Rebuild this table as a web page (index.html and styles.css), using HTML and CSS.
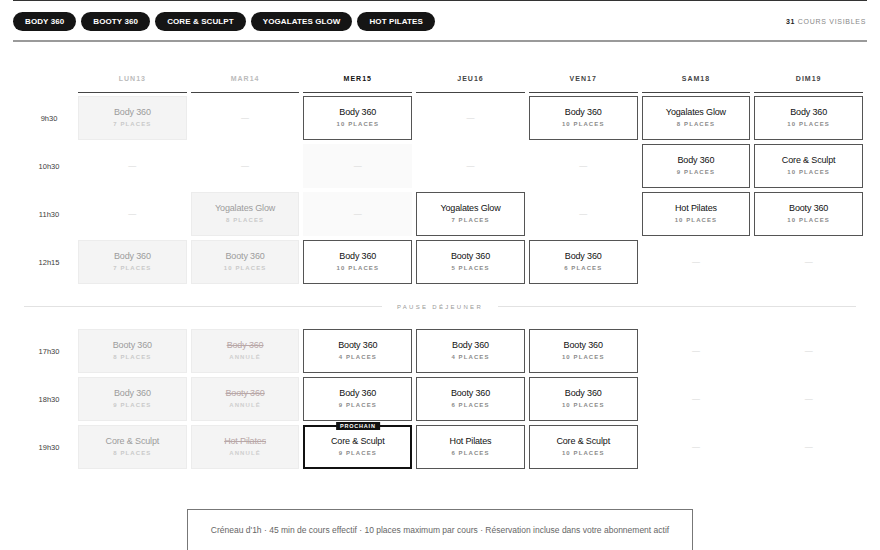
FILE: index.html
```html
<!DOCTYPE html>
<html lang="fr">
<head>
<meta charset="utf-8">
<title>Planning des cours</title>
<link rel="stylesheet" href="styles.css">
</head>
<body>
<div class="page">
  <header class="topbar">
    <nav class="filters">
      <span class="pill">Body 360</span>
      <span class="pill">Booty 360</span>
      <span class="pill">Core &amp; Sculpt</span>
      <span class="pill">Yogalates Glow</span>
      <span class="pill">Hot Pilates</span>
    </nav>
    <div class="count"><b>31</b> COURS VISIBLES</div>
  </header>

  <section class="schedule">
    <div class="grid head">
      <div></div>
      <div class="day past">LUN13</div>
      <div class="day past">MAR14</div>
      <div class="day today">MER15</div>
      <div class="day">JEU16</div>
      <div class="day">VEN17</div>
      <div class="day">SAM18</div>
      <div class="day">DIM19</div>
    </div>

    <div class="grid body">
      <div class="time">9h30</div>
      <div class="cell done"><span class="name">Body 360</span><span class="places">7 PLACES</span></div>
      <div class="cell empty">—</div>
      <div class="cell open"><span class="name">Body 360</span><span class="places">10 PLACES</span></div>
      <div class="cell empty">—</div>
      <div class="cell open"><span class="name">Body 360</span><span class="places">10 PLACES</span></div>
      <div class="cell open"><span class="name">Yogalates Glow</span><span class="places">8 PLACES</span></div>
      <div class="cell open"><span class="name">Body 360</span><span class="places">10 PLACES</span></div>

      <div class="time">10h30</div>
      <div class="cell empty">—</div>
      <div class="cell empty">—</div>
      <div class="cell empty shade">—</div>
      <div class="cell empty">—</div>
      <div class="cell empty">—</div>
      <div class="cell open"><span class="name">Body 360</span><span class="places">9 PLACES</span></div>
      <div class="cell open"><span class="name">Core &amp; Sculpt</span><span class="places">10 PLACES</span></div>

      <div class="time">11h30</div>
      <div class="cell empty">—</div>
      <div class="cell done"><span class="name">Yogalates Glow</span><span class="places">8 PLACES</span></div>
      <div class="cell empty shade">—</div>
      <div class="cell open"><span class="name">Yogalates Glow</span><span class="places">7 PLACES</span></div>
      <div class="cell empty">—</div>
      <div class="cell open"><span class="name">Hot Pilates</span><span class="places">10 PLACES</span></div>
      <div class="cell open"><span class="name">Booty 360</span><span class="places">10 PLACES</span></div>

      <div class="time">12h15</div>
      <div class="cell done"><span class="name">Body 360</span><span class="places">7 PLACES</span></div>
      <div class="cell done"><span class="name">Booty 360</span><span class="places">10 PLACES</span></div>
      <div class="cell open"><span class="name">Body 360</span><span class="places">10 PLACES</span></div>
      <div class="cell open"><span class="name">Booty 360</span><span class="places">5 PLACES</span></div>
      <div class="cell open"><span class="name">Body 360</span><span class="places">6 PLACES</span></div>
      <div class="cell empty">—</div>
      <div class="cell empty">—</div>

      <div class="pause"><span class="pause-label">PAUSE DÉJEUNER</span></div>

      <div class="time">17h30</div>
      <div class="cell done"><span class="name">Booty 360</span><span class="places">8 PLACES</span></div>
      <div class="cell done cancelled"><span class="name">Body 360</span><span class="places">ANNULÉ</span></div>
      <div class="cell open"><span class="name">Booty 360</span><span class="places">4 PLACES</span></div>
      <div class="cell open"><span class="name">Body 360</span><span class="places">4 PLACES</span></div>
      <div class="cell open"><span class="name">Booty 360</span><span class="places">10 PLACES</span></div>
      <div class="cell empty">—</div>
      <div class="cell empty">—</div>

      <div class="time">18h30</div>
      <div class="cell done"><span class="name">Body 360</span><span class="places">9 PLACES</span></div>
      <div class="cell done cancelled"><span class="name">Booty 360</span><span class="places">ANNULÉ</span></div>
      <div class="cell open"><span class="name">Body 360</span><span class="places">9 PLACES</span></div>
      <div class="cell open"><span class="name">Booty 360</span><span class="places">6 PLACES</span></div>
      <div class="cell open"><span class="name">Body 360</span><span class="places">10 PLACES</span></div>
      <div class="cell empty">—</div>
      <div class="cell empty">—</div>

      <div class="time">19h30</div>
      <div class="cell done"><span class="name">Core &amp; Sculpt</span><span class="places">8 PLACES</span></div>
      <div class="cell done cancelled"><span class="name">Hot Pilates</span><span class="places">ANNULÉ</span></div>
      <div class="cell open next"><span class="badge">PROCHAIN</span><span class="name">Core &amp; Sculpt</span><span class="places">9 PLACES</span></div>
      <div class="cell open"><span class="name">Hot Pilates</span><span class="places">6 PLACES</span></div>
      <div class="cell open"><span class="name">Core &amp; Sculpt</span><span class="places">10 PLACES</span></div>
      <div class="cell empty">—</div>
      <div class="cell empty">—</div>
    </div>
  </section>

  <footer class="info">Créneau d'1h · 45 min de cours effectif · 10 places maximum par cours · Réservation incluse dans votre abonnement actif</footer>
</div>
</body>
</html>
```

FILE: styles.css
```css
* { box-sizing: border-box; }

html, body {
  margin: 0;
  padding: 0;
  background: #fff;
  font-family: "Liberation Sans", Arial, sans-serif;
  color: #111;
}

.page {
  padding: 0 13px;
}

.topbar {
  display: flex;
  justify-content: space-between;
  align-items: center;
  border-top: 1px solid #333;
  border-bottom: 2px solid #9a9a9a;
  padding: 11px 0 9px;
}

.filters {
  display: flex;
  gap: 5px;
}

.pill {
  display: inline-flex;
  align-items: center;
  height: 19px;
  padding: 0 12px;
  border-radius: 10px;
  background: #151515;
  color: #fff;
  font-size: 8px;
  font-weight: bold;
  letter-spacing: 0.1px;
  text-transform: uppercase;
}

.count {
  font-size: 7px;
  letter-spacing: 0.7px;
  color: #888;
  margin-right: 1px;
}

.count b {
  color: #222;
}

.schedule {
  margin: 0 4px 0 11px;
}

.grid {
  display: grid;
  grid-template-columns: 50px repeat(7, 1fr);
  column-gap: 4px;
}

.head {
  margin-bottom: 3px;
}

.day {
  padding-top: 33px;
  padding-bottom: 9px;
  border-bottom: 1px solid #444;
  text-align: center;
  font-size: 7px;
  line-height: 8px;
  font-weight: bold;
  letter-spacing: 1px;
  color: #444;
}

.day.past { color: #bbb; }
.day.today { color: #111; }

.body {
  grid-template-rows: repeat(4, 44px) 37px repeat(3, 44px);
  row-gap: 4px;
}

.time {
  display: flex;
  align-items: center;
  justify-content: center;
  font-size: 7.5px;
  color: #3c3c3c;
}

.cell {
  position: relative;
  display: flex;
  flex-direction: column;
  align-items: center;
  justify-content: center;
  padding-bottom: 2px;
}

.name {
  font-size: 9px;
  line-height: 11px;
  letter-spacing: -0.15px;
}

.places {
  margin-top: 3px;
  font-size: 6px;
  line-height: 7px;
  font-weight: bold;
  letter-spacing: 1.1px;
  color: #8a8a8a;
}

.open {
  background: #fff;
  border: 1px solid #555;
}

.open .name { color: #111; }

.done {
  background: #f4f4f4;
  border: 1px solid #ececec;
}

.done .name { color: #9c9c9c; }
.done .places { color: #c9c9c9; }

.cancelled .name {
  color: #b9a8a8;
  text-decoration: line-through;
}

.cancelled .places { color: #cfcfcf; }

.empty {
  font-size: 8px;
  color: #d6d6d6;
}

.empty.shade {
  background: #fafafa;
}

.next {
  border: 2px solid #111;
}

.badge {
  position: absolute;
  top: -5px;
  left: 50%;
  transform: translateX(-50%);
  background: #111;
  color: #fff;
  font-size: 5.5px;
  line-height: 8px;
  font-weight: bold;
  letter-spacing: 0.8px;
  padding: 0 4px;
  white-space: nowrap;
}

.pause {
  grid-column: 1 / -1;
  display: flex;
  align-items: center;
  gap: 15px;
  margin-right: 7px;
}

.pause::before,
.pause::after {
  content: "";
  flex: 1;
  height: 1px;
  background: #e2e2e2;
}

.pause-label {
  font-size: 6px;
  letter-spacing: 2.3px;
  color: #999;
}

.info {
  width: fit-content;
  margin: 40px auto 0;
  border: 1px solid #777;
  padding: 15px 23px 24px;
  font-size: 8.5px;
  color: #666;
}
```
